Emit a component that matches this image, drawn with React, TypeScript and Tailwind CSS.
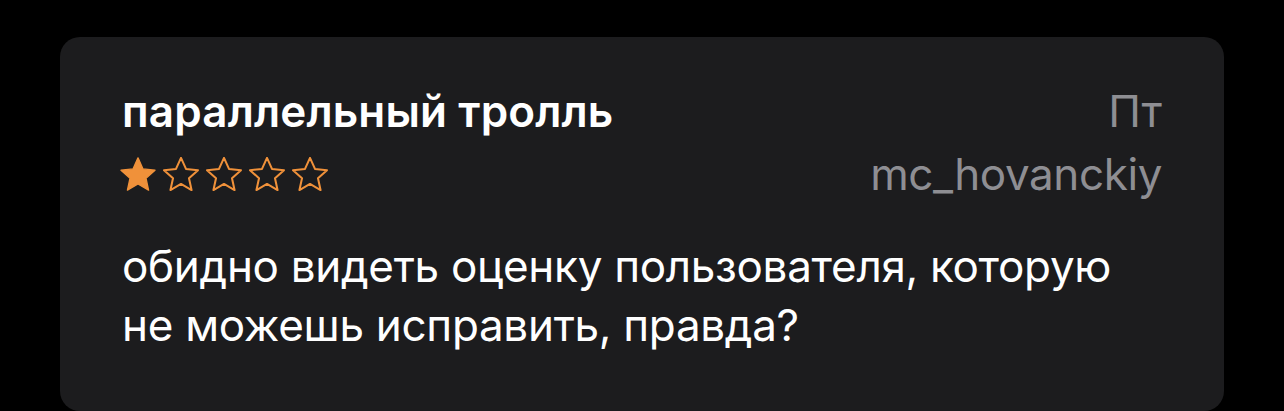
import React from "react";

const Star = ({ filled }: { filled: boolean }) => (
  <svg width="36" height="34" viewBox="1.4 1.1 21.2 20.1" className="shrink-0">
    <path
      d="M12 1.6l2.95 6.55 7.1.72-5.33 4.78 1.52 7-6.24-3.62-6.24 3.62 1.52-7L1.95 8.87l7.1-.72z"
      fill={filled ? "#f0913a" : "none"}
      stroke="#f0913a"
      strokeWidth={filled ? 0.8 : 1.2}
      strokeLinejoin="round"
    />
  </svg>
);

export default function App() {
  return (
    <div className="w-[1284px] h-[411px] bg-black overflow-hidden pt-[37px] pl-[60px]" style={{ fontFamily: "Inter, 'Noto Sans', sans-serif" }}>
      <div className="w-[1164px] h-[374px] bg-[#1c1c1e] rounded-[20px] px-[62px] pt-[48px]">
        <div className="flex justify-between items-start h-[115px]">
          <div className="flex flex-col">
            <div className="text-white font-semibold text-[44px] leading-[52px] tracking-[0.15px]">параллельный тролль</div>
            <div className="flex gap-[7px] mt-[20px] -ml-[2px]">
              <Star filled />
              <Star filled={false} />
              <Star filled={false} />
              <Star filled={false} />
              <Star filled={false} />
            </div>
          </div>
          <div className="flex flex-col items-end text-[#8e8e93] text-[44px] leading-[52px]">
            <div>Пт</div>
            <div className="mt-[11px] tracking-[-0.4px]">mc_hovanckiy</div>
          </div>
        </div>
        <div className="text-white text-[44px] leading-[59px] mt-[37px] w-[1020px] tracking-[-0.3px]">
          обидно видеть оценку пользователя, которую не можешь исправить, правда?
        </div>
      </div>
    </div>
  );
}
